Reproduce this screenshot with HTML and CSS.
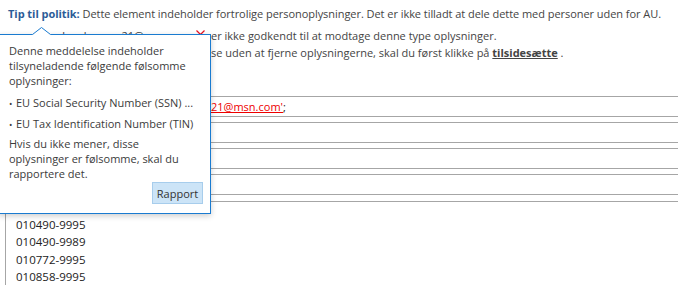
FILE: index.html
```html
<!DOCTYPE html>
<html lang="da">
<head>
    <meta charset="UTF-8">
    <title>Tip til politik</title>
    <link rel="stylesheet" href="styles.css">
</head>
<body>
    <div class="infobar">
        <p class="first"><span class="tip-title">Tip til politik:</span> Dette element indeholder fortrolige personoplysninger. Det er ikke tilladt at dele dette med personer uden for AU.</p>
        <p class="rest">
            <span class="covered covered-x">lars.hansen21@msn.com<svg class="remove" width="9" height="9" viewBox="0 0 9 9"><path d="M0.5 0.5 L8.5 8.5 M8.5 0.5 L0.5 8.5" stroke="#e81123" stroke-width="1.2" fill="none"/></svg></span>er ikke godkendt til at modtage denne type oplysninger.<br>
            <span class="covered"></span>se uden at fjerne oplysningerne, skal du først klikke på <a class="override">tilsidesætte</a> .
        </p>
    </div>

    <div class="fields">
        <div class="field"><span class="covered"></span><span class="mail">21@msn.com'</span>;</div>
        <div class="field"></div>
        <div class="field"></div>
        <div class="field"></div>
    </div>

    <div class="numbers">
        <div>010490-9995</div>
        <div>010490-9989</div>
        <div>010772-9995</div>
        <div>010858-9995</div>
    </div>

    <div class="callout">
        <svg class="pointer" width="19" height="8" viewBox="0 0 19 8">
            <polygon points="0,8 9.5,0.5 19,8" fill="#fff"/>
            <polyline points="0.5,7.5 9.5,0.5 18.5,7.5" fill="none" stroke="#1a7bd0" stroke-width="1"/>
        </svg>
        <p>Denne meddelelse indeholder tilsyneladende følgende følsomme oplysninger:</p>
        <ul>
            <li>EU Social Security Number (SSN) ...</li>
            <li>EU Tax Identification Number (TIN)</li>
        </ul>
        <p class="note">Hvis du ikke mener, disse oplysninger er følsomme, skal du rapportere det.</p>
        <div class="actions">
            <button type="button">Rapport</button>
        </div>
    </div>
</body>
</html>
```
FILE: styles.css
```css
body {
    margin: 0;
    font-family: "Open Sans", "Noto Sans", sans-serif;
    font-size: 11px;
    color: #444;
    background-color: #fff;
    position: relative;
    height: 286px;
    overflow: hidden;
}
p {
    margin: 0;
}
.infobar {
    padding: 5px 0 0 8px;
    white-space: nowrap;
}
.infobar .first {
    line-height: 18px;
    margin-bottom: 4px;
    letter-spacing: -0.05px;
}
.infobar .rest {
    line-height: 17px;
}
.tip-title {
    font-weight: bold;
    color: #2b5c97;
}
.covered {
    display: inline-block;
    width: 203px;
    height: 1px;
    overflow: hidden;
    white-space: nowrap;
    vertical-align: top;
}
.covered-x {
    height: auto;
    text-align: right;
}
.remove {
    margin: 0 6px 0 5px;
    vertical-align: 1px;
}
.override {
    font-weight: bold;
    text-decoration: underline;
    color: #444;
}
.fields {
    margin-top: 35px;
}
.field {
    height: 19px;
    line-height: 19px;
    border-top: 1px solid #a6a6a6;
    border-bottom: 1px solid #a6a6a6;
    margin-bottom: 5px;
    padding-left: 8px;
    color: #222;
    white-space: nowrap;
}
.field:last-child {
    margin-bottom: 6px;
}
.mail {
    color: #e00;
    text-decoration: underline;
}
.numbers {
    margin-left: 5px;
    border-top: 1px solid #a6a6a6;
    border-left: 1px solid #a6a6a6;
    padding: 14px 0 0 10px;
    line-height: 17.33px;
    font-size: 11.5px;
    color: #222;
}
.callout {
    position: absolute;
    left: -2px;
    top: 34px;
    width: 194px;
    padding: 8px 7px 9px 10px;
    background-color: #fff;
    border: 1px solid #1a7bd0;
    box-shadow: 0 2px 6px rgba(0, 0, 0, 0.2);
    line-height: 15px;
    color: #3b3b3b;
}
.pointer {
    position: absolute;
    left: 33px;
    top: -8px;
}
.callout ul {
    list-style: none;
    margin: 7px 0 0;
    padding: 0;
}
.callout li {
    white-space: nowrap;
    margin-bottom: 5px;
}
.callout li::before {
    content: "\2022";
    display: inline-block;
    width: 7px;
    font-size: 9px;
}
.callout .note {
    width: 186px;
    margin-top: -1px;
}
.actions {
    text-align: right;
    margin-top: 1px;
}
.actions button {
    width: 51px;
    height: 22px;
    padding: 0;
    font-family: inherit;
    font-size: 11px;
    color: #333;
    background-color: #cce4f7;
    border: 1px solid #a7cdec;
    border-radius: 0;
}
```
